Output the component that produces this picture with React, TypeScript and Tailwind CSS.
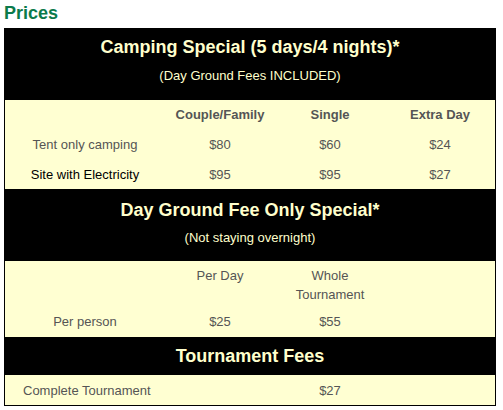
import React from "react";

const font = { fontFamily: '"Liberation Sans", Arial, sans-serif' };

function Row({ cells, dark, h = "h-[30px]" }: { cells: React.ReactNode[]; dark?: boolean; h?: string }) {
  return (
    <div className={`grid grid-cols-[160px_110px_110px_110px] ${h} items-center text-[13px] leading-[15px]`}>
      {cells.map((c, i) => (
        <div key={i} className={`text-center ${i === 0 && dark ? "text-black" : "text-[#555555]"}`}>
          {c}
        </div>
      ))}
    </div>
  );
}

export default function App() {
  return (
    <div className="w-[503px] h-[410px] bg-white" style={font}>
      <div className="h-[28px] pl-[4px] pt-[3px]">
        <h1 className="text-[18px] leading-[21px] font-bold text-[#0b7a4b]">Prices</h1>
      </div>
      <div className="ml-[4px] w-[492px] border border-black bg-[#ffffd2]">
        {/* Section 1 */}
        <div className="bg-black h-[71px] flex flex-col items-center text-[#ffffcc]">
          <div className="mt-[7px] text-[18px] leading-[22px] font-bold">Camping Special (5 days/4 nights)*</div>
          <div className="mt-[10px] text-[13px] leading-[15px]">(Day Ground Fees INCLUDED)</div>
        </div>
        <div className="h-[89px]">
          <Row h="h-[29px]" cells={[<span />, <b>Couple/Family</b>, <b>Single</b>, <b>Extra Day</b>]} />
          <Row cells={["Tent only camping", "$80", "$60", "$24"]} />
          <Row dark cells={["Site with Electricity", "$95", "$95", "$27"]} />
        </div>
        {/* Section 2 */}
        <div className="bg-black h-[72px] flex flex-col items-center text-[#ffffcc]">
          <div className="mt-[10px] text-[18px] leading-[22px] font-bold">Day Ground Fee Only Special*</div>
          <div className="mt-[9px] text-[13px] leading-[15px]">(Not staying overnight)</div>
        </div>
        <div className="h-[76px]">
          <div className="grid grid-cols-[160px_110px_110px_110px] h-[48px] pt-[5px] text-[13px] leading-[19px] text-[#555555]">
            <div />
            <div className="text-center">Per Day</div>
            <div className="text-center">
              Whole
              <br />
              Tournament
            </div>
            <div />
          </div>
          <Row h="h-[24px]" cells={["Per person", "$25", "$55", ""]} />
        </div>
        {/* Section 3 */}
        <div className="bg-black h-[38px] flex items-center justify-center text-[#ffffcc]">
          <div className="text-[18px] leading-[22px] font-bold">Tournament Fees</div>
        </div>
        <div className="h-[30px] grid grid-cols-[160px_110px_110px_110px] items-center text-[13px] leading-[15px] text-[#555555]">
          <div className="pl-[18px]">Complete Tournament</div>
          <div />
          <div className="text-center">$27</div>
          <div />
        </div>
      </div>
    </div>
  );
}
